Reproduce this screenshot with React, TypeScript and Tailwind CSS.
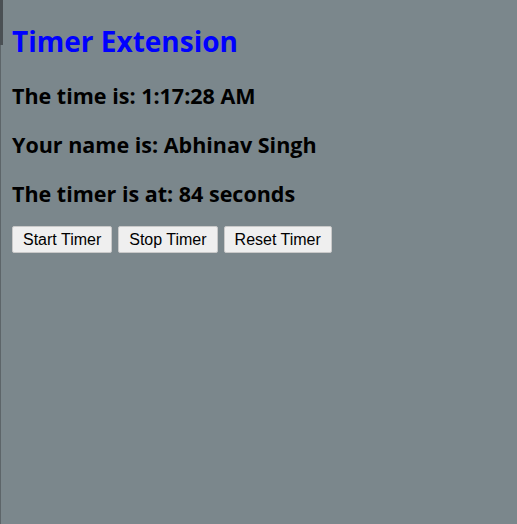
import React from "react";

export default function App() {
  const font = { fontFamily: '"Open Sans", "Noto Sans", sans-serif' };
  return (
    <div className="relative min-h-[524px] w-full bg-[#7b878c] border-l border-[#5d6569]">
      <div className="absolute left-[-1px] top-0 h-[45px] w-[3px] bg-[#4a5054]" />
      <div className="flex flex-col items-start pl-[10px]" style={font}>
        <h1 className="mt-[22px] pl-[1px] text-[28px] leading-[38px] font-bold text-[#0000ff]">
          Timer Extension
        </h1>
        <p className="mt-[21px] pl-[1px] text-[21.5px] leading-[30px] font-bold text-black">
          The time is: 1:17:28 AM
        </p>
        <p className="mt-[19px] pl-[1px] text-[21.5px] leading-[30px] font-bold text-black">
          Your name is: Abhinav Singh
        </p>
        <p className="mt-[19px] pl-[1px] text-[21.5px] leading-[30px] font-bold text-black">
          The timer is at: 84 seconds
        </p>
        <div className="mt-[17px] pl-[1px] flex gap-[6px]" style={{ fontFamily: '"Liberation Sans", Arial, sans-serif' }}>
          {["Start Timer", "Stop Timer", "Reset Timer"].map((t) => (
            <button
              key={t}
              className="h-[27px] px-[10px] text-[16px] leading-[18px] text-black bg-[#efefef] border border-[#c9c9c9] rounded-[2px]"
            >
              {t}
            </button>
          ))}
        </div>
      </div>
    </div>
  );
}
